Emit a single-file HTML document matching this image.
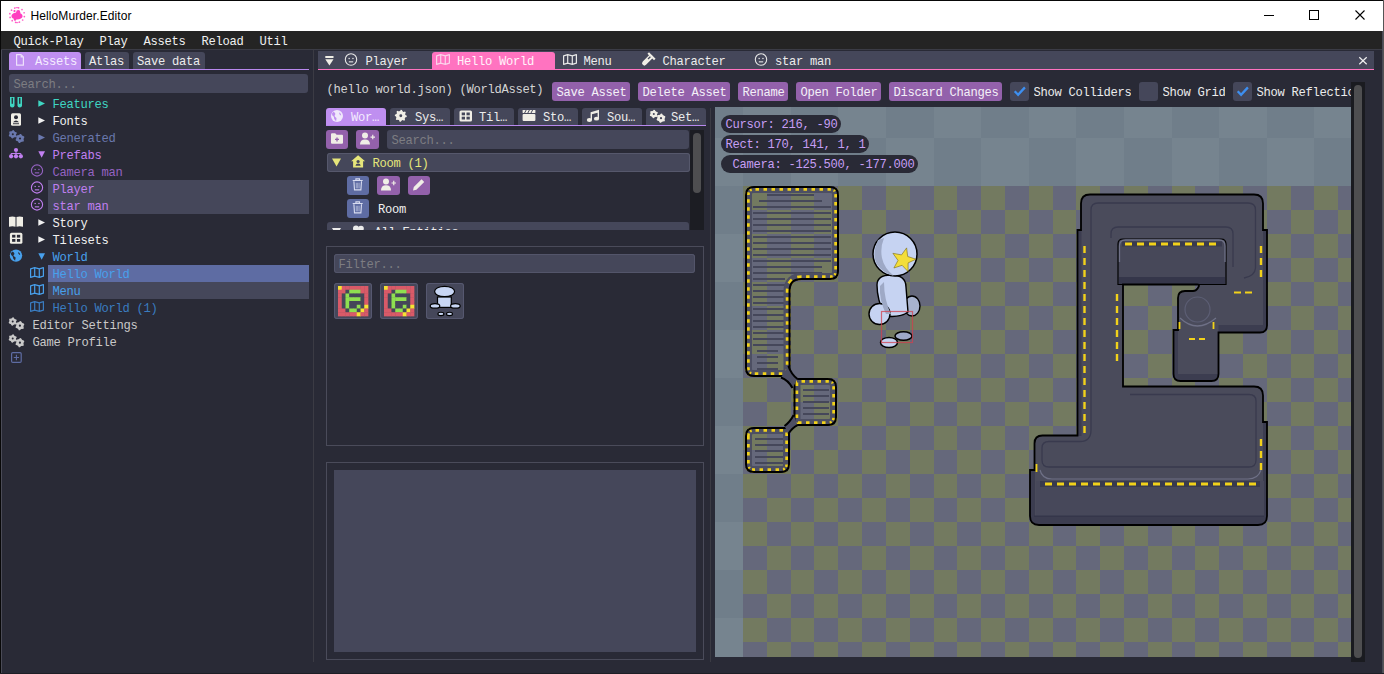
<!DOCTYPE html><html><head><meta charset="utf-8"><style>
html,body{margin:0;padding:0}
body{width:1384px;height:674px;overflow:hidden;position:relative;background:#292a36;font-family:"Liberation Mono",monospace}
.t{position:absolute;font-family:"Liberation Mono",monospace;font-size:12.15px;letter-spacing:-0.29px;line-height:14px;white-space:pre}
.r{position:absolute}
.s{position:absolute;overflow:visible}
.ts{position:absolute;font-family:"Liberation Sans",sans-serif;font-size:12px;line-height:14px;white-space:pre;color:#000}
</style></head><body>
<div class="r" style="left:0px;top:0px;width:1384px;height:31px;background:#ffffff;"></div>
<div class="r" style="left:0px;top:0px;width:1384px;height:1px;background:#080808;"></div>
<div class="r" style="left:0px;top:0px;width:1px;height:674px;background:#080808;"></div>
<div class="r" style="left:1383px;top:0px;width:1px;height:674px;background:#555555;"></div>
<div class="ts" style="left:30.5px;top:9px;letter-spacing:0.1px">HelloMurder.Editor</div>
<div class="r" style="left:1264px;top:15px;width:10px;height:1px;background:#000;"></div>
<div class="r" style="left:1309px;top:10px;width:10px;height:10px;background:transparent;border:1px solid #000;box-sizing:border-box"></div>
<svg class="s" style="left:1355px;top:10px;" width="10" height="10" viewBox="0 0 10 10"><path d="M0.5 0.5L9.5 9.5M9.5 0.5L0.5 9.5" stroke="#000" stroke-width="1.1"/></svg>
<div class="r" style="left:1px;top:31px;width:1382px;height:18px;background:#242424;"></div>
<div class="r" style="left:1px;top:49px;width:1382px;height:1px;background:#3b3c46;"></div>
<div class="r" style="left:1382px;top:31px;width:1px;height:642px;background:#4a4b57;"></div>
<div class="t" style="left:13.5px;top:35px;color:#f0f0f0;">Quick-Play</div>
<div class="t" style="left:99.5px;top:35px;color:#f0f0f0;">Play</div>
<div class="t" style="left:143.5px;top:35px;color:#f0f0f0;">Assets</div>
<div class="t" style="left:201.5px;top:35px;color:#f0f0f0;">Reload</div>
<div class="t" style="left:259.5px;top:35px;color:#f0f0f0;">Util</div>
<div class="r" style="left:1px;top:50px;width:2px;height:623px;background:#4a4b57;width:1px"></div>
<div class="r" style="left:9px;top:52px;width:72px;height:17px;background:#bf8ff0;border-radius:3px 3px 0 0"></div>
<div class="r" style="left:85px;top:52px;width:44px;height:17px;background:#45475a;border-radius:3px 3px 0 0"></div>
<div class="r" style="left:133px;top:52px;width:72px;height:17px;background:#45475a;border-radius:3px 3px 0 0"></div>
<div class="r" style="left:9px;top:69px;width:300px;height:1px;background:#b888ee;"></div>
<div class="t" style="left:35px;top:55px;color:#f4ecff;">Assets</div>
<div class="t" style="left:89px;top:55px;color:#ececec;">Atlas</div>
<div class="t" style="left:137px;top:55px;color:#ececec;">Save data</div>
<div class="r" style="left:9px;top:74px;width:299px;height:19px;background:#45475a;border-radius:3px"></div>
<div class="t" style="left:13.5px;top:78px;color:#7d7d82;">Search...</div>
<div class="r" style="left:48px;top:180px;width:261px;height:34px;background:#45475a;"></div>
<div class="r" style="left:48px;top:265px;width:261px;height:17px;background:#5e6ca3;"></div>
<div class="r" style="left:48px;top:282px;width:261px;height:17px;background:#45475a;"></div>
<div class="t" style="left:52.5px;top:98px;color:#3fd6c2;">Features</div>
<div class="t" style="left:52.5px;top:115px;color:#f0f0f0;">Fonts</div>
<div class="t" style="left:52.5px;top:132px;color:#6a78ad;">Generated</div>
<div class="t" style="left:52.5px;top:149px;color:#c07ff0;">Prefabs</div>
<div class="t" style="left:52.5px;top:166px;color:#9563c2;">Camera man</div>
<div class="t" style="left:52.5px;top:183px;color:#c07ff0;">Player</div>
<div class="t" style="left:52.5px;top:200px;color:#c07ff0;">star man</div>
<div class="t" style="left:52.5px;top:217px;color:#f0f0f0;">Story</div>
<div class="t" style="left:52.5px;top:234px;color:#f0f0f0;">Tilesets</div>
<div class="t" style="left:52.5px;top:251px;color:#48a0ec;">World</div>
<div class="t" style="left:52.5px;top:268px;color:#48a0ec;">Hello World</div>
<div class="t" style="left:52.5px;top:285px;color:#48a0ec;">Menu</div>
<div class="t" style="left:52.5px;top:302px;color:#3a7cc0;">Hello World (1)</div>
<div class="t" style="left:32.5px;top:319px;color:#c9c9c9;">Editor Settings</div>
<div class="t" style="left:32.5px;top:336px;color:#c9c9c9;">Game Profile</div>
<div class="r" style="left:313px;top:50px;width:1px;height:612px;background:#3b3b44;"></div>
<div class="r" style="left:318px;top:51px;width:1056px;height:18px;background:#45475a;"></div>
<div class="r" style="left:432px;top:52px;width:123px;height:17px;background:#ff73c0;border-radius:3px 3px 0 0"></div>
<div class="r" style="left:318px;top:69px;width:1056px;height:1px;background:#ff73c0;"></div>
<div class="t" style="left:365.5px;top:55px;color:#ececec;">Player</div>
<div class="t" style="left:457px;top:55px;color:#fff4fb;">Hello World</div>
<div class="t" style="left:583.5px;top:55px;color:#ececec;">Menu</div>
<div class="t" style="left:662.5px;top:55px;color:#ececec;">Character</div>
<div class="t" style="left:775px;top:55px;color:#ececec;">star man</div>
<div class="t" style="left:326.5px;top:83px;color:#d4d4d4;">(hello world.json) (WorldAsset)</div>
<div class="r" style="left:552px;top:82px;width:78px;height:19px;background:#9361ab;border-radius:3px"></div>
<div class="t" style="left:556.5px;top:86px;color:#f4f0f8;">Save Asset</div>
<div class="r" style="left:638px;top:82px;width:92px;height:19px;background:#9361ab;border-radius:3px"></div>
<div class="t" style="left:642.5px;top:86px;color:#f4f0f8;">Delete Asset</div>
<div class="r" style="left:738px;top:82px;width:50px;height:19px;background:#9361ab;border-radius:3px"></div>
<div class="t" style="left:742.5px;top:86px;color:#f4f0f8;">Rename</div>
<div class="r" style="left:796px;top:82px;width:85px;height:19px;background:#9361ab;border-radius:3px"></div>
<div class="t" style="left:800.5px;top:86px;color:#f4f0f8;">Open Folder</div>
<div class="r" style="left:889px;top:82px;width:113px;height:19px;background:#9361ab;border-radius:3px"></div>
<div class="t" style="left:893.5px;top:86px;color:#f4f0f8;">Discard Changes</div>
<div class="r" style="left:1010px;top:82px;width:19px;height:19px;background:#45475a;border-radius:3px"></div>
<div class="t" style="left:1033.5px;top:86px;color:#ececec;max-width:317px;overflow:hidden">Show Colliders</div>
<div class="r" style="left:1139px;top:82px;width:19px;height:19px;background:#45475a;border-radius:3px"></div>
<div class="t" style="left:1162.5px;top:86px;color:#ececec;max-width:188px;overflow:hidden">Show Grid</div>
<div class="r" style="left:1233px;top:82px;width:19px;height:19px;background:#45475a;border-radius:3px"></div>
<div class="t" style="left:1256.5px;top:86px;color:#ececec;max-width:94px;overflow:hidden">Show Reflection</div>
<div class="r" style="left:326px;top:108px;width:60px;height:17px;background:#bf8ff0;border-radius:3px 3px 0 0"></div>
<div class="t" style="left:351px;top:111px;color:#f4ecff;">Wor…</div>
<div class="r" style="left:390px;top:108px;width:60px;height:17px;background:#45475a;border-radius:3px 3px 0 0"></div>
<div class="t" style="left:415px;top:111px;color:#ececec;">Sys…</div>
<div class="r" style="left:454px;top:108px;width:60px;height:17px;background:#45475a;border-radius:3px 3px 0 0"></div>
<div class="t" style="left:479px;top:111px;color:#ececec;">Til…</div>
<div class="r" style="left:518px;top:108px;width:60px;height:17px;background:#45475a;border-radius:3px 3px 0 0"></div>
<div class="t" style="left:543px;top:111px;color:#ececec;">Sto…</div>
<div class="r" style="left:582px;top:108px;width:60px;height:17px;background:#45475a;border-radius:3px 3px 0 0"></div>
<div class="t" style="left:607px;top:111px;color:#ececec;">Sou…</div>
<div class="r" style="left:646px;top:108px;width:60px;height:17px;background:#45475a;border-radius:3px 3px 0 0"></div>
<div class="t" style="left:671px;top:111px;color:#ececec;">Set…</div>
<div class="r" style="left:326px;top:125px;width:380px;height:1px;background:#b888ee;"></div>
<div class="r" style="left:326px;top:130px;width:22px;height:19px;background:#9361ab;border-radius:3px"></div>
<div class="r" style="left:356px;top:130px;width:23px;height:19px;background:#9361ab;border-radius:3px"></div>
<div class="r" style="left:387px;top:130px;width:302px;height:19px;background:#45475a;border-radius:3px"></div>
<div class="t" style="left:391.5px;top:134px;color:#7d7d82;">Search...</div>
<div class="r" style="left:690px;top:130px;width:14px;height:100px;background:#1c1d23;"></div>
<div class="r" style="left:693px;top:133px;width:8px;height:60px;background:#4e4e50;border-radius:4px"></div>
<div class="r" style="left:327px;top:153px;width:363px;height:19px;background:#45475a;border-radius:3px;box-shadow:inset 0 0 0 1px #56586c"></div>
<div class="t" style="left:372.5px;top:157px;color:#e6e67a;">Room (1)</div>
<div class="r" style="left:347px;top:176px;width:22px;height:19px;background:#5e6ca3;border-radius:3px"></div>
<div class="r" style="left:377px;top:176px;width:23px;height:19px;background:#9361ab;border-radius:3px"></div>
<div class="r" style="left:408px;top:176px;width:22px;height:19px;background:#9361ab;border-radius:3px"></div>
<div class="r" style="left:347px;top:199px;width:22px;height:19px;background:#5e6ca3;border-radius:3px"></div>
<div class="t" style="left:378px;top:203px;color:#f0f0f0;">Room</div>
<div style="position:absolute;left:327px;top:222px;width:362px;height:8px;overflow:hidden"><div class="r" style="left:0;top:0;width:362px;height:19px;background:#45475a;border-radius:3px"></div><div class="t" style="left:47.5px;top:4px;color:#ececec">All Entities</div><svg class="s" style="left:0;top:0" width="362" height="19"><path d="M5 6L14 6L9.5 14Z" fill="#ececec"/><circle cx="29" cy="6.5" r="3" fill="#ececec"/><circle cx="34" cy="6.5" r="2.8" fill="#ececec"/></svg></div>
<div class="r" style="left:326px;top:246px;width:378px;height:200px;background:transparent;border:1px solid #4a4b5a;box-sizing:border-box"></div>
<div class="r" style="left:334px;top:254px;width:361px;height:19px;background:#45475a;border-radius:3px;box-shadow:inset 0 0 0 1px #53556a"></div>
<div class="t" style="left:338.5px;top:258px;color:#7d7d82;">Filter...</div>
<div class="r" style="left:334px;top:283px;width:38px;height:36px;background:#45475a;border-radius:3px;box-shadow:inset 0 0 0 1px #565870"></div>
<div class="r" style="left:380px;top:283px;width:38px;height:36px;background:#45475a;border-radius:3px;box-shadow:inset 0 0 0 1px #565870"></div>
<div class="r" style="left:426px;top:283px;width:38px;height:36px;background:#45475a;border-radius:3px;box-shadow:inset 0 0 0 1px #565870"></div>
<div class="r" style="left:326px;top:462px;width:378px;height:198px;background:transparent;border:1px solid #4a4b5a;box-sizing:border-box"></div>
<div class="r" style="left:334px;top:470px;width:362px;height:182px;background:#45475a;"></div>
<div class="r" style="left:710px;top:108px;width:1px;height:554px;background:#3b3b44;"></div>
<svg class="s" style="left:715px;top:107px;overflow:hidden" width="636" height="550" shape-rendering="crispEdges"><rect x="0" y="0" width="636" height="550" fill="#76848f"/><rect x="-20" y="-17" width="48" height="48" fill="#707e8a"/><rect x="76" y="-17" width="47" height="48" fill="#707e8a"/><rect x="171" y="-17" width="48" height="48" fill="#707e8a"/><rect x="266" y="-17" width="48" height="48" fill="#707e8a"/><rect x="361" y="-17" width="48" height="48" fill="#707e8a"/><rect x="457" y="-17" width="47" height="48" fill="#707e8a"/><rect x="552" y="-17" width="47" height="48" fill="#707e8a"/><rect x="647" y="-17" width="48" height="48" fill="#707e8a"/><rect x="28" y="31" width="48" height="48" fill="#707e8a"/><rect x="123" y="31" width="48" height="48" fill="#707e8a"/><rect x="219" y="31" width="47" height="48" fill="#707e8a"/><rect x="314" y="31" width="47" height="48" fill="#707e8a"/><rect x="409" y="31" width="48" height="48" fill="#707e8a"/><rect x="504" y="31" width="48" height="48" fill="#707e8a"/><rect x="599" y="31" width="48" height="48" fill="#707e8a"/><rect x="-20" y="79" width="48" height="48" fill="#707e8a"/><rect x="76" y="79" width="47" height="48" fill="#707e8a"/><rect x="171" y="79" width="48" height="48" fill="#707e8a"/><rect x="266" y="79" width="48" height="48" fill="#707e8a"/><rect x="361" y="79" width="48" height="48" fill="#707e8a"/><rect x="457" y="79" width="47" height="48" fill="#707e8a"/><rect x="552" y="79" width="47" height="48" fill="#707e8a"/><rect x="647" y="79" width="48" height="48" fill="#707e8a"/><rect x="28" y="127" width="48" height="48" fill="#707e8a"/><rect x="123" y="127" width="48" height="48" fill="#707e8a"/><rect x="219" y="127" width="47" height="48" fill="#707e8a"/><rect x="314" y="127" width="47" height="48" fill="#707e8a"/><rect x="409" y="127" width="48" height="48" fill="#707e8a"/><rect x="504" y="127" width="48" height="48" fill="#707e8a"/><rect x="599" y="127" width="48" height="48" fill="#707e8a"/><rect x="-20" y="175" width="48" height="48" fill="#707e8a"/><rect x="76" y="175" width="47" height="48" fill="#707e8a"/><rect x="171" y="175" width="48" height="48" fill="#707e8a"/><rect x="266" y="175" width="48" height="48" fill="#707e8a"/><rect x="361" y="175" width="48" height="48" fill="#707e8a"/><rect x="457" y="175" width="47" height="48" fill="#707e8a"/><rect x="552" y="175" width="47" height="48" fill="#707e8a"/><rect x="647" y="175" width="48" height="48" fill="#707e8a"/><rect x="28" y="223" width="48" height="48" fill="#707e8a"/><rect x="123" y="223" width="48" height="48" fill="#707e8a"/><rect x="219" y="223" width="47" height="48" fill="#707e8a"/><rect x="314" y="223" width="47" height="48" fill="#707e8a"/><rect x="409" y="223" width="48" height="48" fill="#707e8a"/><rect x="504" y="223" width="48" height="48" fill="#707e8a"/><rect x="599" y="223" width="48" height="48" fill="#707e8a"/><rect x="-20" y="271" width="48" height="48" fill="#707e8a"/><rect x="76" y="271" width="47" height="48" fill="#707e8a"/><rect x="171" y="271" width="48" height="48" fill="#707e8a"/><rect x="266" y="271" width="48" height="48" fill="#707e8a"/><rect x="361" y="271" width="48" height="48" fill="#707e8a"/><rect x="457" y="271" width="47" height="48" fill="#707e8a"/><rect x="552" y="271" width="47" height="48" fill="#707e8a"/><rect x="647" y="271" width="48" height="48" fill="#707e8a"/><rect x="28" y="319" width="48" height="48" fill="#707e8a"/><rect x="123" y="319" width="48" height="48" fill="#707e8a"/><rect x="219" y="319" width="47" height="48" fill="#707e8a"/><rect x="314" y="319" width="47" height="48" fill="#707e8a"/><rect x="409" y="319" width="48" height="48" fill="#707e8a"/><rect x="504" y="319" width="48" height="48" fill="#707e8a"/><rect x="599" y="319" width="48" height="48" fill="#707e8a"/><rect x="-20" y="367" width="48" height="48" fill="#707e8a"/><rect x="76" y="367" width="47" height="48" fill="#707e8a"/><rect x="171" y="367" width="48" height="48" fill="#707e8a"/><rect x="266" y="367" width="48" height="48" fill="#707e8a"/><rect x="361" y="367" width="48" height="48" fill="#707e8a"/><rect x="457" y="367" width="47" height="48" fill="#707e8a"/><rect x="552" y="367" width="47" height="48" fill="#707e8a"/><rect x="647" y="367" width="48" height="48" fill="#707e8a"/><rect x="28" y="415" width="48" height="48" fill="#707e8a"/><rect x="123" y="415" width="48" height="48" fill="#707e8a"/><rect x="219" y="415" width="47" height="48" fill="#707e8a"/><rect x="314" y="415" width="47" height="48" fill="#707e8a"/><rect x="409" y="415" width="48" height="48" fill="#707e8a"/><rect x="504" y="415" width="48" height="48" fill="#707e8a"/><rect x="599" y="415" width="48" height="48" fill="#707e8a"/><rect x="-20" y="463" width="48" height="48" fill="#707e8a"/><rect x="76" y="463" width="47" height="48" fill="#707e8a"/><rect x="171" y="463" width="48" height="48" fill="#707e8a"/><rect x="266" y="463" width="48" height="48" fill="#707e8a"/><rect x="361" y="463" width="48" height="48" fill="#707e8a"/><rect x="457" y="463" width="47" height="48" fill="#707e8a"/><rect x="552" y="463" width="47" height="48" fill="#707e8a"/><rect x="647" y="463" width="48" height="48" fill="#707e8a"/><rect x="28" y="511" width="48" height="48" fill="#707e8a"/><rect x="123" y="511" width="48" height="48" fill="#707e8a"/><rect x="219" y="511" width="47" height="48" fill="#707e8a"/><rect x="314" y="511" width="47" height="48" fill="#707e8a"/><rect x="409" y="511" width="48" height="48" fill="#707e8a"/><rect x="504" y="511" width="48" height="48" fill="#707e8a"/><rect x="599" y="511" width="48" height="48" fill="#707e8a"/><rect x="28" y="79" width="608" height="471" fill="#737a60"/><rect x="52" y="79" width="24" height="24" fill="#65687b"/><rect x="99" y="79" width="24" height="24" fill="#65687b"/><rect x="147" y="79" width="24" height="24" fill="#65687b"/><rect x="195" y="79" width="24" height="24" fill="#65687b"/><rect x="242" y="79" width="24" height="24" fill="#65687b"/><rect x="290" y="79" width="24" height="24" fill="#65687b"/><rect x="338" y="79" width="23" height="24" fill="#65687b"/><rect x="385" y="79" width="24" height="24" fill="#65687b"/><rect x="433" y="79" width="24" height="24" fill="#65687b"/><rect x="480" y="79" width="24" height="24" fill="#65687b"/><rect x="528" y="79" width="24" height="24" fill="#65687b"/><rect x="576" y="79" width="23" height="24" fill="#65687b"/><rect x="623" y="79" width="24" height="24" fill="#65687b"/><rect x="28" y="103" width="24" height="24" fill="#65687b"/><rect x="76" y="103" width="23" height="24" fill="#65687b"/><rect x="123" y="103" width="24" height="24" fill="#65687b"/><rect x="171" y="103" width="24" height="24" fill="#65687b"/><rect x="219" y="103" width="23" height="24" fill="#65687b"/><rect x="266" y="103" width="24" height="24" fill="#65687b"/><rect x="314" y="103" width="24" height="24" fill="#65687b"/><rect x="361" y="103" width="24" height="24" fill="#65687b"/><rect x="409" y="103" width="24" height="24" fill="#65687b"/><rect x="457" y="103" width="23" height="24" fill="#65687b"/><rect x="504" y="103" width="24" height="24" fill="#65687b"/><rect x="552" y="103" width="24" height="24" fill="#65687b"/><rect x="599" y="103" width="24" height="24" fill="#65687b"/><rect x="647" y="103" width="24" height="24" fill="#65687b"/><rect x="52" y="127" width="24" height="24" fill="#65687b"/><rect x="99" y="127" width="24" height="24" fill="#65687b"/><rect x="147" y="127" width="24" height="24" fill="#65687b"/><rect x="195" y="127" width="24" height="24" fill="#65687b"/><rect x="242" y="127" width="24" height="24" fill="#65687b"/><rect x="290" y="127" width="24" height="24" fill="#65687b"/><rect x="338" y="127" width="23" height="24" fill="#65687b"/><rect x="385" y="127" width="24" height="24" fill="#65687b"/><rect x="433" y="127" width="24" height="24" fill="#65687b"/><rect x="480" y="127" width="24" height="24" fill="#65687b"/><rect x="528" y="127" width="24" height="24" fill="#65687b"/><rect x="576" y="127" width="23" height="24" fill="#65687b"/><rect x="623" y="127" width="24" height="24" fill="#65687b"/><rect x="28" y="151" width="24" height="24" fill="#65687b"/><rect x="76" y="151" width="23" height="24" fill="#65687b"/><rect x="123" y="151" width="24" height="24" fill="#65687b"/><rect x="171" y="151" width="24" height="24" fill="#65687b"/><rect x="219" y="151" width="23" height="24" fill="#65687b"/><rect x="266" y="151" width="24" height="24" fill="#65687b"/><rect x="314" y="151" width="24" height="24" fill="#65687b"/><rect x="361" y="151" width="24" height="24" fill="#65687b"/><rect x="409" y="151" width="24" height="24" fill="#65687b"/><rect x="457" y="151" width="23" height="24" fill="#65687b"/><rect x="504" y="151" width="24" height="24" fill="#65687b"/><rect x="552" y="151" width="24" height="24" fill="#65687b"/><rect x="599" y="151" width="24" height="24" fill="#65687b"/><rect x="647" y="151" width="24" height="24" fill="#65687b"/><rect x="52" y="175" width="24" height="24" fill="#65687b"/><rect x="99" y="175" width="24" height="24" fill="#65687b"/><rect x="147" y="175" width="24" height="24" fill="#65687b"/><rect x="195" y="175" width="24" height="24" fill="#65687b"/><rect x="242" y="175" width="24" height="24" fill="#65687b"/><rect x="290" y="175" width="24" height="24" fill="#65687b"/><rect x="338" y="175" width="23" height="24" fill="#65687b"/><rect x="385" y="175" width="24" height="24" fill="#65687b"/><rect x="433" y="175" width="24" height="24" fill="#65687b"/><rect x="480" y="175" width="24" height="24" fill="#65687b"/><rect x="528" y="175" width="24" height="24" fill="#65687b"/><rect x="576" y="175" width="23" height="24" fill="#65687b"/><rect x="623" y="175" width="24" height="24" fill="#65687b"/><rect x="28" y="199" width="24" height="24" fill="#65687b"/><rect x="76" y="199" width="23" height="24" fill="#65687b"/><rect x="123" y="199" width="24" height="24" fill="#65687b"/><rect x="171" y="199" width="24" height="24" fill="#65687b"/><rect x="219" y="199" width="23" height="24" fill="#65687b"/><rect x="266" y="199" width="24" height="24" fill="#65687b"/><rect x="314" y="199" width="24" height="24" fill="#65687b"/><rect x="361" y="199" width="24" height="24" fill="#65687b"/><rect x="409" y="199" width="24" height="24" fill="#65687b"/><rect x="457" y="199" width="23" height="24" fill="#65687b"/><rect x="504" y="199" width="24" height="24" fill="#65687b"/><rect x="552" y="199" width="24" height="24" fill="#65687b"/><rect x="599" y="199" width="24" height="24" fill="#65687b"/><rect x="647" y="199" width="24" height="24" fill="#65687b"/><rect x="52" y="223" width="24" height="24" fill="#65687b"/><rect x="99" y="223" width="24" height="24" fill="#65687b"/><rect x="147" y="223" width="24" height="24" fill="#65687b"/><rect x="195" y="223" width="24" height="24" fill="#65687b"/><rect x="242" y="223" width="24" height="24" fill="#65687b"/><rect x="290" y="223" width="24" height="24" fill="#65687b"/><rect x="338" y="223" width="23" height="24" fill="#65687b"/><rect x="385" y="223" width="24" height="24" fill="#65687b"/><rect x="433" y="223" width="24" height="24" fill="#65687b"/><rect x="480" y="223" width="24" height="24" fill="#65687b"/><rect x="528" y="223" width="24" height="24" fill="#65687b"/><rect x="576" y="223" width="23" height="24" fill="#65687b"/><rect x="623" y="223" width="24" height="24" fill="#65687b"/><rect x="28" y="247" width="24" height="24" fill="#65687b"/><rect x="76" y="247" width="23" height="24" fill="#65687b"/><rect x="123" y="247" width="24" height="24" fill="#65687b"/><rect x="171" y="247" width="24" height="24" fill="#65687b"/><rect x="219" y="247" width="23" height="24" fill="#65687b"/><rect x="266" y="247" width="24" height="24" fill="#65687b"/><rect x="314" y="247" width="24" height="24" fill="#65687b"/><rect x="361" y="247" width="24" height="24" fill="#65687b"/><rect x="409" y="247" width="24" height="24" fill="#65687b"/><rect x="457" y="247" width="23" height="24" fill="#65687b"/><rect x="504" y="247" width="24" height="24" fill="#65687b"/><rect x="552" y="247" width="24" height="24" fill="#65687b"/><rect x="599" y="247" width="24" height="24" fill="#65687b"/><rect x="647" y="247" width="24" height="24" fill="#65687b"/><rect x="52" y="271" width="24" height="24" fill="#65687b"/><rect x="99" y="271" width="24" height="24" fill="#65687b"/><rect x="147" y="271" width="24" height="24" fill="#65687b"/><rect x="195" y="271" width="24" height="24" fill="#65687b"/><rect x="242" y="271" width="24" height="24" fill="#65687b"/><rect x="290" y="271" width="24" height="24" fill="#65687b"/><rect x="338" y="271" width="23" height="24" fill="#65687b"/><rect x="385" y="271" width="24" height="24" fill="#65687b"/><rect x="433" y="271" width="24" height="24" fill="#65687b"/><rect x="480" y="271" width="24" height="24" fill="#65687b"/><rect x="528" y="271" width="24" height="24" fill="#65687b"/><rect x="576" y="271" width="23" height="24" fill="#65687b"/><rect x="623" y="271" width="24" height="24" fill="#65687b"/><rect x="28" y="295" width="24" height="24" fill="#65687b"/><rect x="76" y="295" width="23" height="24" fill="#65687b"/><rect x="123" y="295" width="24" height="24" fill="#65687b"/><rect x="171" y="295" width="24" height="24" fill="#65687b"/><rect x="219" y="295" width="23" height="24" fill="#65687b"/><rect x="266" y="295" width="24" height="24" fill="#65687b"/><rect x="314" y="295" width="24" height="24" fill="#65687b"/><rect x="361" y="295" width="24" height="24" fill="#65687b"/><rect x="409" y="295" width="24" height="24" fill="#65687b"/><rect x="457" y="295" width="23" height="24" fill="#65687b"/><rect x="504" y="295" width="24" height="24" fill="#65687b"/><rect x="552" y="295" width="24" height="24" fill="#65687b"/><rect x="599" y="295" width="24" height="24" fill="#65687b"/><rect x="647" y="295" width="24" height="24" fill="#65687b"/><rect x="52" y="319" width="24" height="24" fill="#65687b"/><rect x="99" y="319" width="24" height="24" fill="#65687b"/><rect x="147" y="319" width="24" height="24" fill="#65687b"/><rect x="195" y="319" width="24" height="24" fill="#65687b"/><rect x="242" y="319" width="24" height="24" fill="#65687b"/><rect x="290" y="319" width="24" height="24" fill="#65687b"/><rect x="338" y="319" width="23" height="24" fill="#65687b"/><rect x="385" y="319" width="24" height="24" fill="#65687b"/><rect x="433" y="319" width="24" height="24" fill="#65687b"/><rect x="480" y="319" width="24" height="24" fill="#65687b"/><rect x="528" y="319" width="24" height="24" fill="#65687b"/><rect x="576" y="319" width="23" height="24" fill="#65687b"/><rect x="623" y="319" width="24" height="24" fill="#65687b"/><rect x="28" y="343" width="24" height="24" fill="#65687b"/><rect x="76" y="343" width="23" height="24" fill="#65687b"/><rect x="123" y="343" width="24" height="24" fill="#65687b"/><rect x="171" y="343" width="24" height="24" fill="#65687b"/><rect x="219" y="343" width="23" height="24" fill="#65687b"/><rect x="266" y="343" width="24" height="24" fill="#65687b"/><rect x="314" y="343" width="24" height="24" fill="#65687b"/><rect x="361" y="343" width="24" height="24" fill="#65687b"/><rect x="409" y="343" width="24" height="24" fill="#65687b"/><rect x="457" y="343" width="23" height="24" fill="#65687b"/><rect x="504" y="343" width="24" height="24" fill="#65687b"/><rect x="552" y="343" width="24" height="24" fill="#65687b"/><rect x="599" y="343" width="24" height="24" fill="#65687b"/><rect x="647" y="343" width="24" height="24" fill="#65687b"/><rect x="52" y="367" width="24" height="24" fill="#65687b"/><rect x="99" y="367" width="24" height="24" fill="#65687b"/><rect x="147" y="367" width="24" height="24" fill="#65687b"/><rect x="195" y="367" width="24" height="24" fill="#65687b"/><rect x="242" y="367" width="24" height="24" fill="#65687b"/><rect x="290" y="367" width="24" height="24" fill="#65687b"/><rect x="338" y="367" width="23" height="24" fill="#65687b"/><rect x="385" y="367" width="24" height="24" fill="#65687b"/><rect x="433" y="367" width="24" height="24" fill="#65687b"/><rect x="480" y="367" width="24" height="24" fill="#65687b"/><rect x="528" y="367" width="24" height="24" fill="#65687b"/><rect x="576" y="367" width="23" height="24" fill="#65687b"/><rect x="623" y="367" width="24" height="24" fill="#65687b"/><rect x="28" y="391" width="24" height="24" fill="#65687b"/><rect x="76" y="391" width="23" height="24" fill="#65687b"/><rect x="123" y="391" width="24" height="24" fill="#65687b"/><rect x="171" y="391" width="24" height="24" fill="#65687b"/><rect x="219" y="391" width="23" height="24" fill="#65687b"/><rect x="266" y="391" width="24" height="24" fill="#65687b"/><rect x="314" y="391" width="24" height="24" fill="#65687b"/><rect x="361" y="391" width="24" height="24" fill="#65687b"/><rect x="409" y="391" width="24" height="24" fill="#65687b"/><rect x="457" y="391" width="23" height="24" fill="#65687b"/><rect x="504" y="391" width="24" height="24" fill="#65687b"/><rect x="552" y="391" width="24" height="24" fill="#65687b"/><rect x="599" y="391" width="24" height="24" fill="#65687b"/><rect x="647" y="391" width="24" height="24" fill="#65687b"/><rect x="52" y="415" width="24" height="24" fill="#65687b"/><rect x="99" y="415" width="24" height="24" fill="#65687b"/><rect x="147" y="415" width="24" height="24" fill="#65687b"/><rect x="195" y="415" width="24" height="24" fill="#65687b"/><rect x="242" y="415" width="24" height="24" fill="#65687b"/><rect x="290" y="415" width="24" height="24" fill="#65687b"/><rect x="338" y="415" width="23" height="24" fill="#65687b"/><rect x="385" y="415" width="24" height="24" fill="#65687b"/><rect x="433" y="415" width="24" height="24" fill="#65687b"/><rect x="480" y="415" width="24" height="24" fill="#65687b"/><rect x="528" y="415" width="24" height="24" fill="#65687b"/><rect x="576" y="415" width="23" height="24" fill="#65687b"/><rect x="623" y="415" width="24" height="24" fill="#65687b"/><rect x="28" y="439" width="24" height="24" fill="#65687b"/><rect x="76" y="439" width="23" height="24" fill="#65687b"/><rect x="123" y="439" width="24" height="24" fill="#65687b"/><rect x="171" y="439" width="24" height="24" fill="#65687b"/><rect x="219" y="439" width="23" height="24" fill="#65687b"/><rect x="266" y="439" width="24" height="24" fill="#65687b"/><rect x="314" y="439" width="24" height="24" fill="#65687b"/><rect x="361" y="439" width="24" height="24" fill="#65687b"/><rect x="409" y="439" width="24" height="24" fill="#65687b"/><rect x="457" y="439" width="23" height="24" fill="#65687b"/><rect x="504" y="439" width="24" height="24" fill="#65687b"/><rect x="552" y="439" width="24" height="24" fill="#65687b"/><rect x="599" y="439" width="24" height="24" fill="#65687b"/><rect x="647" y="439" width="24" height="24" fill="#65687b"/><rect x="52" y="463" width="24" height="24" fill="#65687b"/><rect x="99" y="463" width="24" height="24" fill="#65687b"/><rect x="147" y="463" width="24" height="24" fill="#65687b"/><rect x="195" y="463" width="24" height="24" fill="#65687b"/><rect x="242" y="463" width="24" height="24" fill="#65687b"/><rect x="290" y="463" width="24" height="24" fill="#65687b"/><rect x="338" y="463" width="23" height="24" fill="#65687b"/><rect x="385" y="463" width="24" height="24" fill="#65687b"/><rect x="433" y="463" width="24" height="24" fill="#65687b"/><rect x="480" y="463" width="24" height="24" fill="#65687b"/><rect x="528" y="463" width="24" height="24" fill="#65687b"/><rect x="576" y="463" width="23" height="24" fill="#65687b"/><rect x="623" y="463" width="24" height="24" fill="#65687b"/><rect x="28" y="487" width="24" height="24" fill="#65687b"/><rect x="76" y="487" width="23" height="24" fill="#65687b"/><rect x="123" y="487" width="24" height="24" fill="#65687b"/><rect x="171" y="487" width="24" height="24" fill="#65687b"/><rect x="219" y="487" width="23" height="24" fill="#65687b"/><rect x="266" y="487" width="24" height="24" fill="#65687b"/><rect x="314" y="487" width="24" height="24" fill="#65687b"/><rect x="361" y="487" width="24" height="24" fill="#65687b"/><rect x="409" y="487" width="24" height="24" fill="#65687b"/><rect x="457" y="487" width="23" height="24" fill="#65687b"/><rect x="504" y="487" width="24" height="24" fill="#65687b"/><rect x="552" y="487" width="24" height="24" fill="#65687b"/><rect x="599" y="487" width="24" height="24" fill="#65687b"/><rect x="647" y="487" width="24" height="24" fill="#65687b"/><rect x="52" y="511" width="24" height="24" fill="#65687b"/><rect x="99" y="511" width="24" height="24" fill="#65687b"/><rect x="147" y="511" width="24" height="24" fill="#65687b"/><rect x="195" y="511" width="24" height="24" fill="#65687b"/><rect x="242" y="511" width="24" height="24" fill="#65687b"/><rect x="290" y="511" width="24" height="24" fill="#65687b"/><rect x="338" y="511" width="23" height="24" fill="#65687b"/><rect x="385" y="511" width="24" height="24" fill="#65687b"/><rect x="433" y="511" width="24" height="24" fill="#65687b"/><rect x="480" y="511" width="24" height="24" fill="#65687b"/><rect x="528" y="511" width="24" height="24" fill="#65687b"/><rect x="576" y="511" width="23" height="24" fill="#65687b"/><rect x="623" y="511" width="24" height="24" fill="#65687b"/><rect x="28" y="535" width="24" height="24" fill="#65687b"/><rect x="76" y="535" width="23" height="24" fill="#65687b"/><rect x="123" y="535" width="24" height="24" fill="#65687b"/><rect x="171" y="535" width="24" height="24" fill="#65687b"/><rect x="219" y="535" width="23" height="24" fill="#65687b"/><rect x="266" y="535" width="24" height="24" fill="#65687b"/><rect x="314" y="535" width="24" height="24" fill="#65687b"/><rect x="361" y="535" width="24" height="24" fill="#65687b"/><rect x="409" y="535" width="24" height="24" fill="#65687b"/><rect x="457" y="535" width="23" height="24" fill="#65687b"/><rect x="504" y="535" width="24" height="24" fill="#65687b"/><rect x="552" y="535" width="24" height="24" fill="#65687b"/><rect x="599" y="535" width="24" height="24" fill="#65687b"/><rect x="647" y="535" width="24" height="24" fill="#65687b"/></svg>
<svg class="s" style="left:715px;top:107px;overflow:hidden" width="636" height="550" viewBox="715 107 636 550"><defs><clipPath id="clA"><path d="M745.00 195.00 Q745.00 186.00 754.00 186.00 L830.00 186.00 Q839.00 186.00 839.00 195.00 L839.00 271.00 Q839.00 280.00 830.00 280.00 L801.50 280.00 Q790.50 280.00 790.50 291.00 L790.50 377.00 Q790.50 377.00 790.50 377.00 L754.00 377.00 Q745.00 377.00 745.00 368.00 Z M793.50 378.00 Q793.50 378.00 793.50 378.00 L828.00 378.00 Q837.00 378.00 837.00 387.00 L837.00 417.00 Q837.00 426.00 828.00 426.00 L793.50 426.00 Q793.50 426.00 793.50 426.00 Z M745.00 436.00 Q745.00 427.00 754.00 427.00 L790.00 427.00 Q790.00 427.00 790.00 427.00 L790.00 464.00 Q790.00 473.00 781.00 473.00 L754.00 473.00 Q745.00 473.00 745.00 464.00 Z M788.4 366 Q791 374 797.5 379 L792.5 388 Q788 380 781 377.5 Z M793.7 415 Q790 422 784.5 426 L788.4 434 Q792 428 797.5 425.2 Z"/></clipPath><clipPath id="clA1"><path d="M745.00 195.00 Q745.00 186.00 754.00 186.00 L830.00 186.00 Q839.00 186.00 839.00 195.00 L839.00 271.00 Q839.00 280.00 830.00 280.00 L801.50 280.00 Q790.50 280.00 790.50 291.00 L790.50 377.00 Q790.50 377.00 790.50 377.00 L754.00 377.00 Q745.00 377.00 745.00 368.00 Z"/></clipPath><clipPath id="clA2"><path d="M793.50 378.00 Q793.50 378.00 793.50 378.00 L828.00 378.00 Q837.00 378.00 837.00 387.00 L837.00 417.00 Q837.00 426.00 828.00 426.00 L793.50 426.00 Q793.50 426.00 793.50 426.00 Z"/></clipPath><clipPath id="clA3"><path d="M745.00 436.00 Q745.00 427.00 754.00 427.00 L790.00 427.00 Q790.00 427.00 790.00 427.00 L790.00 464.00 Q790.00 473.00 781.00 473.00 L754.00 473.00 Q745.00 473.00 745.00 464.00 Z"/></clipPath></defs><g fill="#45475a" clip-path="url(#clA1)"><rect x="767" y="194" width="47" height="2"/><rect x="759" y="200" width="63" height="2"/><rect x="753" y="206" width="78" height="2"/><rect x="753" y="212" width="78" height="2"/><rect x="753" y="218" width="78" height="2"/><rect x="753" y="224" width="78" height="2"/><rect x="753" y="230" width="78" height="2"/><rect x="753" y="236" width="78" height="2"/><rect x="753" y="242" width="78" height="2"/><rect x="753" y="248" width="78" height="2"/><rect x="753" y="254" width="78" height="2"/><rect x="753" y="260" width="78" height="2"/><rect x="753" y="266" width="69" height="2"/><rect x="753" y="272" width="69" height="2"/><rect x="753" y="278" width="32" height="2"/><rect x="753" y="284" width="32" height="2"/><rect x="753" y="290" width="32" height="2"/><rect x="753" y="296" width="32" height="2"/><rect x="753" y="302" width="32" height="2"/><rect x="753" y="308" width="32" height="2"/><rect x="753" y="314" width="32" height="2"/><rect x="753" y="320" width="32" height="2"/><rect x="753" y="326" width="32" height="2"/><rect x="753" y="332" width="32" height="2"/><rect x="753" y="338" width="32" height="2"/><rect x="753" y="344" width="32" height="2"/><rect x="757" y="350" width="21" height="2"/><rect x="757" y="356" width="21" height="2"/><rect x="757" y="362" width="21" height="2"/><rect x="757" y="368" width="21" height="2"/></g><g fill="#45475a"><rect x="803" y="389" width="26" height="2"/><rect x="803" y="395" width="26" height="2"/><rect x="803" y="401" width="26" height="2"/><rect x="803" y="407" width="26" height="2"/><rect x="803" y="413" width="26" height="2"/><rect x="803" y="419" width="26" height="2"/><rect x="755" y="438" width="28" height="2"/><rect x="755" y="444" width="28" height="2"/><rect x="755" y="450" width="28" height="2"/><rect x="755" y="456" width="28" height="2"/><rect x="755" y="462" width="28" height="2"/></g><g clip-path="url(#clA1)"><path d="M745.00 195.00 Q745.00 186.00 754.00 186.00 L830.00 186.00 Q839.00 186.00 839.00 195.00 L839.00 271.00 Q839.00 280.00 830.00 280.00 L801.50 280.00 Q790.50 280.00 790.50 291.00 L790.50 377.00 Q790.50 377.00 790.50 377.00 L754.00 377.00 Q745.00 377.00 745.00 368.00 Z" fill="none" stroke="#4d4f63" stroke-width="14"/><path d="M745.00 195.00 Q745.00 186.00 754.00 186.00 L830.00 186.00 Q839.00 186.00 839.00 195.00 L839.00 271.00 Q839.00 280.00 830.00 280.00 L801.50 280.00 Q790.50 280.00 790.50 291.00 L790.50 377.00 Q790.50 377.00 790.50 377.00 L754.00 377.00 Q745.00 377.00 745.00 368.00 Z" fill="none" stroke="#f2d21a" stroke-width="9.5" stroke-dasharray="3.5 4.5"/><path d="M745.00 195.00 Q745.00 186.00 754.00 186.00 L830.00 186.00 Q839.00 186.00 839.00 195.00 L839.00 271.00 Q839.00 280.00 830.00 280.00 L801.50 280.00 Q790.50 280.00 790.50 291.00 L790.50 377.00 Q790.50 377.00 790.50 377.00 L754.00 377.00 Q745.00 377.00 745.00 368.00 Z" fill="none" stroke="#000" stroke-width="4"/></g><g clip-path="url(#clA2)"><path d="M793.50 378.00 Q793.50 378.00 793.50 378.00 L828.00 378.00 Q837.00 378.00 837.00 387.00 L837.00 417.00 Q837.00 426.00 828.00 426.00 L793.50 426.00 Q793.50 426.00 793.50 426.00 Z" fill="none" stroke="#4d4f63" stroke-width="14"/><path d="M793.50 378.00 Q793.50 378.00 793.50 378.00 L828.00 378.00 Q837.00 378.00 837.00 387.00 L837.00 417.00 Q837.00 426.00 828.00 426.00 L793.50 426.00 Q793.50 426.00 793.50 426.00 Z" fill="none" stroke="#f2d21a" stroke-width="9.5" stroke-dasharray="3.5 4.5"/><path d="M793.50 378.00 Q793.50 378.00 793.50 378.00 L828.00 378.00 Q837.00 378.00 837.00 387.00 L837.00 417.00 Q837.00 426.00 828.00 426.00 L793.50 426.00 Q793.50 426.00 793.50 426.00 Z" fill="none" stroke="#000" stroke-width="4"/></g><g clip-path="url(#clA3)"><path d="M745.00 436.00 Q745.00 427.00 754.00 427.00 L790.00 427.00 Q790.00 427.00 790.00 427.00 L790.00 464.00 Q790.00 473.00 781.00 473.00 L754.00 473.00 Q745.00 473.00 745.00 464.00 Z" fill="none" stroke="#4d4f63" stroke-width="14"/><path d="M745.00 436.00 Q745.00 427.00 754.00 427.00 L790.00 427.00 Q790.00 427.00 790.00 427.00 L790.00 464.00 Q790.00 473.00 781.00 473.00 L754.00 473.00 Q745.00 473.00 745.00 464.00 Z" fill="none" stroke="#f2d21a" stroke-width="9.5" stroke-dasharray="3.5 4.5"/><path d="M745.00 436.00 Q745.00 427.00 754.00 427.00 L790.00 427.00 Q790.00 427.00 790.00 427.00 L790.00 464.00 Q790.00 473.00 781.00 473.00 L754.00 473.00 Q745.00 473.00 745.00 464.00 Z" fill="none" stroke="#000" stroke-width="4"/></g><path d="M788.4 366 Q791 374 797.5 379 L792.5 388 Q788 380 781 377.5 Z M793.7 415 Q790 422 784.5 426 L788.4 434 Q792 428 797.5 425.2 Z" fill="#4d4f63"/><path d="M788.4 366 Q791 374 797.5 379 M792.5 388 Q788 380 781 377.5 M793.7 415 Q790 422 784.5 426 M788.4 434 Q792 428 797.5 425.2" fill="none" stroke="#000" stroke-width="2"/><defs><clipPath id="clB"><path d="M1081.00 203.50 Q1081.00 194.50 1090.00 194.50 L1254.00 194.50 Q1263.00 194.50 1263.00 203.50 L1263.00 230.00 Q1263.00 230.00 1263.00 230.00 L1267.00 230.00 Q1267.00 230.00 1267.00 230.00 L1267.00 325.50 Q1267.00 332.50 1260.00 332.50 L1218.50 332.50 Q1218.50 332.50 1218.50 332.50 L1218.50 374.00 Q1218.50 381.00 1211.50 381.00 L1180.50 381.00 Q1173.50 381.00 1173.50 374.00 L1173.50 330.00 Q1173.50 330.00 1173.50 330.00 L1178.00 330.00 Q1178.00 330.00 1178.00 330.00 L1178.00 298.00 Q1178.00 291.00 1185.00 291.00 L1193.00 291.00 Q1196.00 291.00 1197.57 288.45 L1198.43 287.05 Q1200.00 284.50 1197.00 284.50 L1123.00 284.50 Q1123.00 284.50 1123.00 284.50 L1123.00 386.50 Q1123.00 386.50 1123.00 386.50 L1254.00 386.50 Q1263.00 386.50 1263.00 395.50 L1263.00 422.00 Q1263.00 422.00 1263.00 422.00 L1267.00 422.00 Q1267.00 422.00 1267.00 422.00 L1267.00 516.00 Q1267.00 525.00 1258.00 525.00 L1039.00 525.00 Q1030.00 525.00 1030.00 516.00 L1030.00 470.00 Q1030.00 470.00 1030.00 470.00 L1034.50 470.00 Q1034.50 470.00 1034.50 470.00 L1034.50 443.50 Q1034.50 435.50 1042.50 435.50 L1077.50 435.50 Q1077.50 435.50 1077.50 435.50 L1077.50 230.00 Q1077.50 230.00 1077.50 230.00 L1081.00 230.00 Q1081.00 230.00 1081.00 230.00 Z"/></clipPath></defs><path d="M1081.00 203.50 Q1081.00 194.50 1090.00 194.50 L1254.00 194.50 Q1263.00 194.50 1263.00 203.50 L1263.00 230.00 Q1263.00 230.00 1263.00 230.00 L1267.00 230.00 Q1267.00 230.00 1267.00 230.00 L1267.00 325.50 Q1267.00 332.50 1260.00 332.50 L1218.50 332.50 Q1218.50 332.50 1218.50 332.50 L1218.50 374.00 Q1218.50 381.00 1211.50 381.00 L1180.50 381.00 Q1173.50 381.00 1173.50 374.00 L1173.50 330.00 Q1173.50 330.00 1173.50 330.00 L1178.00 330.00 Q1178.00 330.00 1178.00 330.00 L1178.00 298.00 Q1178.00 291.00 1185.00 291.00 L1193.00 291.00 Q1196.00 291.00 1197.57 288.45 L1198.43 287.05 Q1200.00 284.50 1197.00 284.50 L1123.00 284.50 Q1123.00 284.50 1123.00 284.50 L1123.00 386.50 Q1123.00 386.50 1123.00 386.50 L1254.00 386.50 Q1263.00 386.50 1263.00 395.50 L1263.00 422.00 Q1263.00 422.00 1263.00 422.00 L1267.00 422.00 Q1267.00 422.00 1267.00 422.00 L1267.00 516.00 Q1267.00 525.00 1258.00 525.00 L1039.00 525.00 Q1030.00 525.00 1030.00 516.00 L1030.00 470.00 Q1030.00 470.00 1030.00 470.00 L1034.50 470.00 Q1034.50 470.00 1034.50 470.00 L1034.50 443.50 Q1034.50 435.50 1042.50 435.50 L1077.50 435.50 Q1077.50 435.50 1077.50 435.50 L1077.50 230.00 Q1077.50 230.00 1077.50 230.00 L1081.00 230.00 Q1081.00 230.00 1081.00 230.00 Z" fill="#4a4b5b"/><g clip-path="url(#clB)"><rect x="1077.5" y="230" width="4" height="206" fill="#3c3d50"/><rect x="1263" y="230" width="4" height="103" fill="#3c3d50"/><rect x="1263" y="422" width="4" height="104" fill="#3c3d50"/><rect x="1030" y="470" width="5" height="56" fill="#3c3d50"/><rect x="1030" y="517" width="237" height="8" fill="#3c3d50"/><rect x="1173.5" y="330" width="4.5" height="51" fill="#3c3d50"/><rect x="1173.5" y="374" width="45" height="7" fill="#3c3d50"/><rect x="1218.5" y="325" width="48.5" height="7.5" fill="#3c3d50"/><path d="M1091 430 V210 Q1091 203 1098 203 H1248 Q1255.5 203 1255.5 210 V268 Q1255 276 1244 278" fill="none" stroke="#393a4e" stroke-width="1.3"/><path d="M1111 238 V234 Q1111 227 1118 227 H1226 Q1233 227 1233 234 V267" fill="none" stroke="#393a4e" stroke-width="1.3"/><path d="M1091 430 Q1091 441.5 1080 441.5 H1049 Q1042 441.5 1042 448 V460 Q1042 467 1049 467 H1249 Q1256 467 1256 460 V401 Q1256 394.5 1249 394.5 H1130" fill="none" stroke="#393a4e" stroke-width="1.3"/><path d="M1118.00 244.00 Q1118.00 239.00 1123.00 239.00 L1221.00 239.00 Q1226.00 239.00 1226.00 244.00 L1226.00 284.50 Q1226.00 284.50 1226.00 284.50 L1118.00 284.50 Q1118.00 284.50 1118.00 284.50 Z" fill="#474859" stroke="#000" stroke-width="1.2"/><rect x="1119" y="277" width="106" height="7" fill="#35364a"/><path d="M1119.5 262 V246 Q1119.5 240 1125.5 240 H1219 Q1225 240 1225 246 V262" fill="none" stroke="#6e7086" stroke-width="1.3"/><circle cx="1197.5" cy="309.5" r="12.5" fill="none" stroke="#5c5e74" stroke-width="1.2"/><path d="M1180 318 Q1197 334 1216 318" fill="none" stroke="#6e7086" stroke-width="1.2"/><path d="M1040 470 Q1042 479 1052 479 L1248 479 Q1258 479 1261 470" fill="none" stroke="#6e7086" stroke-width="1.2"/><rect x="1036" y="481" width="228" height="36" fill="#47485a"/><rect x="1040" y="481" width="220" height="6" fill="#393a4e"/><rect x="1034" y="515.5" width="230" height="1.5" fill="#35364a"/><rect x="1122" y="241.5" width="100" height="5" fill="#393a4e"/></g><path d="M1081.00 203.50 Q1081.00 194.50 1090.00 194.50 L1254.00 194.50 Q1263.00 194.50 1263.00 203.50 L1263.00 230.00 Q1263.00 230.00 1263.00 230.00 L1267.00 230.00 Q1267.00 230.00 1267.00 230.00 L1267.00 325.50 Q1267.00 332.50 1260.00 332.50 L1218.50 332.50 Q1218.50 332.50 1218.50 332.50 L1218.50 374.00 Q1218.50 381.00 1211.50 381.00 L1180.50 381.00 Q1173.50 381.00 1173.50 374.00 L1173.50 330.00 Q1173.50 330.00 1173.50 330.00 L1178.00 330.00 Q1178.00 330.00 1178.00 330.00 L1178.00 298.00 Q1178.00 291.00 1185.00 291.00 L1193.00 291.00 Q1196.00 291.00 1197.57 288.45 L1198.43 287.05 Q1200.00 284.50 1197.00 284.50 L1123.00 284.50 Q1123.00 284.50 1123.00 284.50 L1123.00 386.50 Q1123.00 386.50 1123.00 386.50 L1254.00 386.50 Q1263.00 386.50 1263.00 395.50 L1263.00 422.00 Q1263.00 422.00 1263.00 422.00 L1267.00 422.00 Q1267.00 422.00 1267.00 422.00 L1267.00 516.00 Q1267.00 525.00 1258.00 525.00 L1039.00 525.00 Q1030.00 525.00 1030.00 516.00 L1030.00 470.00 Q1030.00 470.00 1030.00 470.00 L1034.50 470.00 Q1034.50 470.00 1034.50 470.00 L1034.50 443.50 Q1034.50 435.50 1042.50 435.50 L1077.50 435.50 Q1077.50 435.50 1077.50 435.50 L1077.50 230.00 Q1077.50 230.00 1077.50 230.00 L1081.00 230.00 Q1081.00 230.00 1081.00 230.00 Z" fill="none" stroke="#000" stroke-width="1.8"/><path d="M1125 244 H1216" stroke="#f2d21a" stroke-width="3" stroke-dasharray="7 5"/><path d="M1045 484 H1256" stroke="#f2d21a" stroke-width="3" stroke-dasharray="7 5"/><path d="M1084.5 246 V436" stroke="#f2d21a" stroke-width="2.4" stroke-dasharray="7 5"/><path d="M1117 294 V364" stroke="#f2d21a" stroke-width="2.4" stroke-dasharray="7 5"/><path d="M1261 246 V280" stroke="#f2d21a" stroke-width="2.4" stroke-dasharray="7 5"/><path d="M1261 439 V472" stroke="#f2d21a" stroke-width="2.4" stroke-dasharray="7 5"/><path d="M1036.5 464 V472" stroke="#f2d21a" stroke-width="1.8"/><path d="M1234 292.5 H1256" stroke="#f2d21a" stroke-width="2.2" stroke-dasharray="7 4"/><path d="M1189 339 H1208" stroke="#f2d21a" stroke-width="2.2" stroke-dasharray="6 4"/><path d="M1179.5 322 V329 M1213.5 322 V329" stroke="#f2d21a" stroke-width="1.8"/><ellipse cx="903.5" cy="336" rx="8.5" ry="4.3" fill="#9ea9c6" stroke="#000" stroke-width="1.5"/><ellipse cx="889" cy="342.5" rx="8.5" ry="5" fill="#c6d3f2" stroke="#000" stroke-width="1.5"/><ellipse cx="912" cy="306" rx="8" ry="10" fill="#a8b3cf" stroke="#000" stroke-width="1.4"/><path d="M877 285 Q877 275 891 275 Q906 275 906 287 L908 312 Q900 318 885 316 Q877 300 877 285 Z" fill="#c6d3f2" stroke="#000" stroke-width="1.4"/><circle cx="879.5" cy="314" r="10.5" fill="#c6d3f2" stroke="#000" stroke-width="1.4"/><circle cx="895" cy="254" r="22" fill="#c6d3f2" stroke="#000" stroke-width="1.5"/><path d="M878 240 Q870 258 880 268 Q886 274 894 276 Q884 268 882 258 Q880 248 884 238 Z" fill="#9ea9c6"/><path d="M880 286 Q879 300 886 314 L891 314 Q884 300 884 282 Z" fill="#9ea9c6"/><polygon points="906.6,247.9 907.7,256.5 916.0,259.2 908.1,262.9 908.1,271.6 902.1,265.3 893.9,268.0 898.0,260.4 892.9,253.3 901.5,254.9" fill="#f4de3a" stroke="#7a6a10" stroke-width="0.6"/><rect x="881.5" y="311.5" width="31" height="31" fill="none" stroke="#d0404e" stroke-width="1.2" opacity="0.75"/></svg>
<div class="r" style="left:721px;top:115px;width:120px;height:18px;background:#292a36;border-radius:9px"></div>
<div class="t" style="left:725.5px;top:118px;color:#c69ef4;">Cursor: 216, -90</div>
<div class="r" style="left:721px;top:135px;width:148px;height:18px;background:#292a36;border-radius:9px"></div>
<div class="t" style="left:725.5px;top:138px;color:#c69ef4;">Rect: 170, 141, 1, 1</div>
<div class="r" style="left:721px;top:155px;width:197px;height:18px;background:#292a36;border-radius:9px"></div>
<div class="t" style="left:725.5px;top:158px;color:#c69ef4;"> Camera: -125.500, -177.000</div>
<div class="r" style="left:1351px;top:82px;width:14px;height:580px;background:#1a1b20;"></div>
<div class="r" style="left:1354px;top:85px;width:8px;height:573px;background:#4e4e50;border-radius:4px"></div>
<svg class="s" style="left:1358.5px;top:57px;" width="8" height="7.5" viewBox="0 0 8 7.5"><path d="M0.3 0.3L7.7 7.2M7.7 0.3L0.3 7.2" stroke="#f0f0f0" stroke-width="1.2"/></svg>
<svg class="s" style="left:0;top:0" width="1384" height="674"><ellipse cx="17" cy="16" rx="5.6" ry="3.6" fill="#ff40c0"/><circle cx="18.2" cy="12.2" r="2.1" fill="#ff40c0"/><circle cx="14.5" cy="11" r="1.1" fill="#ff40c0"/><circle cx="15" cy="19.5" r="1.2" fill="#ff40c0"/><ellipse cx="17" cy="7.6" rx="1.8" ry="0.6" fill="#ff70d0"/><ellipse cx="17" cy="22.6" rx="1.8" ry="0.6" fill="#ff70d0"/><circle cx="24.35" cy="16.57" r="0.85" fill="#ff5cc6"/><circle cx="22.65" cy="20.00" r="0.85" fill="#ff5cc6"/><circle cx="19.45" cy="22.12" r="0.85" fill="#ff5cc6"/><circle cx="15.63" cy="22.35" r="0.85" fill="#ff5cc6"/><circle cx="12.20" cy="20.65" r="0.85" fill="#ff5cc6"/><circle cx="10.08" cy="17.45" r="0.85" fill="#ff5cc6"/><circle cx="9.85" cy="13.63" r="0.85" fill="#ff5cc6"/><circle cx="11.55" cy="10.20" r="0.85" fill="#ff5cc6"/><circle cx="14.75" cy="8.08" r="0.85" fill="#ff5cc6"/><circle cx="18.57" cy="7.85" r="0.85" fill="#ff5cc6"/><circle cx="22.00" cy="9.55" r="0.85" fill="#ff5cc6"/><circle cx="24.12" cy="12.75" r="0.85" fill="#ff5cc6"/><path d="M38.3 100.3L45 103.5L38.3 106.7Z" fill="#3fd6c2"/><path d="M38.3 117.3L45 120.5L38.3 123.7Z" fill="#f0f0f0"/><path d="M38.3 134.3L45 137.5L38.3 140.7Z" fill="#6a78ad"/><path d="M38.3 151.3L45 151.3L41.65 157.7Z" fill="#c07ff0"/><path d="M38.3 219.3L45 222.5L38.3 225.7Z" fill="#f0f0f0"/><path d="M38.3 236.3L45 239.5L38.3 242.7Z" fill="#f0f0f0"/><path d="M38.3 253.3L45 253.3L41.65 259.7Z" fill="#48a0ec"/><path d="M16.6 54.6 H21 L23.4 57 V65.2 H16.6 Z" fill="none" stroke="#ede0fb" stroke-width="1.2" stroke-linejoin="round"/><path d="M20.6 54.6 L23.4 57.4 L20.6 57.4 Z" fill="#ede0fb"/><path d="M10 97 L14.5 97 L14.5 105.5 Q14.5 107.6 12.25 107.6 Q10 107.6 10 105.5 Z" fill="#3fd6c2"/><rect x="11.6" y="97.8" width="1.3" height="6" fill="#292a36"/><path d="M17.5 97 L22.0 97 L22.0 105.5 Q22.0 107.6 19.75 107.6 Q17.5 107.6 17.5 105.5 Z" fill="#3fd6c2"/><rect x="19.1" y="97.8" width="1.3" height="6" fill="#292a36"/><rect x="11" y="113.3" width="10" height="12.5" rx="1.5" fill="#f0eee6"/><circle cx="16" cy="117.3" r="2" fill="#292a36"/><path d="M13 122.3 Q16 118.8 19 122.3 Z" fill="#292a36"/><rect x="13" y="123.3" width="6" height="0.9" fill="#292a36"/><polygon points="12.80,130.10 13.89,130.24 14.44,131.46 15.12,131.98 16.44,132.20 16.86,133.21 16.08,134.30 15.96,135.15 16.44,136.40 15.77,137.27 14.44,137.14 13.65,137.46 12.80,138.50 11.71,138.36 11.16,137.14 10.48,136.62 9.16,136.40 8.74,135.39 9.52,134.30 9.64,133.45 9.16,132.20 9.83,131.33 11.16,131.46 11.95,131.14" fill="#6a78ad"/><circle cx="12.8" cy="134.3" r="3.11" fill="#6a78ad"/><circle cx="12.8" cy="134.3" r="1.01" fill="#292a36"/><polygon points="20.00,133.90 21.19,134.06 21.79,135.39 22.54,135.96 23.98,136.20 24.44,137.31 23.59,138.50 23.47,139.43 23.98,140.80 23.25,141.75 21.79,141.61 20.93,141.97 20.00,143.10 18.81,142.94 18.21,141.61 17.46,141.04 16.02,140.80 15.56,139.69 16.41,138.50 16.53,137.57 16.02,136.20 16.75,135.25 18.21,135.39 19.07,135.03" fill="#6a78ad"/><circle cx="20.0" cy="138.5" r="3.40" fill="#6a78ad"/><circle cx="20.0" cy="138.5" r="1.10" fill="#292a36"/><circle cx="16" cy="150" r="2.1" fill="#c07ff0"/><path d="M16 151.5 V153.5 M11.1 155.5 V153.5 H20.9 V155.5 M16 153.5 V155.5" stroke="#c07ff0" stroke-width="1" fill="none"/><circle cx="11.1" cy="156.3" r="2.1" fill="#c07ff0"/><circle cx="16" cy="156.3" r="2.1" fill="#c07ff0"/><circle cx="20.9" cy="156.3" r="2.1" fill="#c07ff0"/><circle cx="37" cy="170.5" r="5.6" fill="none" stroke="#9563c2" stroke-width="1.1"/><rect x="34.5" y="168.9" width="1.3" height="1.2" fill="#9563c2"/><rect x="38.3" y="168.9" width="1.3" height="1.2" fill="#9563c2"/><rect x="34.8" y="172.3" width="4.4" height="1.1" fill="#9563c2"/><circle cx="37" cy="187.5" r="5.6" fill="none" stroke="#c07ff0" stroke-width="1.1"/><rect x="34.5" y="185.9" width="1.3" height="1.2" fill="#c07ff0"/><rect x="38.3" y="185.9" width="1.3" height="1.2" fill="#c07ff0"/><rect x="34.8" y="189.3" width="4.4" height="1.1" fill="#c07ff0"/><circle cx="37" cy="204.5" r="5.6" fill="none" stroke="#c07ff0" stroke-width="1.1"/><rect x="34.5" y="202.9" width="1.3" height="1.2" fill="#c07ff0"/><rect x="38.3" y="202.9" width="1.3" height="1.2" fill="#c07ff0"/><rect x="34.8" y="206.3" width="4.4" height="1.1" fill="#c07ff0"/><path d="M9 217.0 Q12.5 215.89999999999998 15.5 217.0 L15.5 226.7 Q12.5 225.7 9 226.7 Z" fill="#f0eee6"/><path d="M16.5 217.0 Q19.5 215.89999999999998 23 217.0 L23 226.7 Q19.5 225.7 16.5 226.7 Z" fill="#f0eee6"/><rect x="9.9" y="232.8" width="12.5" height="11" rx="1.6" fill="#f0eee6"/><rect x="12.100000000000001" y="234.8" width="3.3" height="2.8" fill="#292a36"/><rect x="16.9" y="234.8" width="3.3" height="2.8" fill="#292a36"/><rect x="12.100000000000001" y="239.0" width="3.3" height="2.8" fill="#292a36"/><rect x="16.9" y="239.0" width="3.3" height="2.8" fill="#292a36"/><circle cx="16" cy="255.6" r="6.2" fill="#48a0ec"/><path d="M12.5 251.4 Q15 252.6 14.2 254.4 Q12.8 255.4 14.2 256.5 Q16.2 257.1 15.4 258.8 L15.1 260.8 Q12.5 258.6 12.8 256.4 Q10.5 255.1 11 253.1 Z" fill="#292a36"/><path d="M18.2 251.79999999999998 Q20.2 253.1 20.2 255.1 Q18.8 254.79999999999998 18.4 253.6 Z" fill="#292a36"/><path d="M30.6 268.8 L34.7 267.6 L39.3 268.8 L43.4 267.6 L43.4 276.2 L39.3 277.4 L34.7 276.2 L30.6 277.4 Z M34.7 267.6 L34.7 276.2 M39.3 268.8 L39.3 277.4" fill="none" stroke="#48a0ec" stroke-width="1.2" stroke-linejoin="round"/><path d="M30.6 285.8 L34.7 284.6 L39.3 285.8 L43.4 284.6 L43.4 293.2 L39.3 294.4 L34.7 293.2 L30.6 294.4 Z M34.7 284.6 L34.7 293.2 M39.3 285.8 L39.3 294.4" fill="none" stroke="#48a0ec" stroke-width="1.2" stroke-linejoin="round"/><path d="M30.6 302.8 L34.7 301.6 L39.3 302.8 L43.4 301.6 L43.4 310.2 L39.3 311.4 L34.7 310.2 L30.6 311.4 Z M34.7 301.6 L34.7 310.2 M39.3 302.8 L39.3 311.4" fill="none" stroke="#3a7cc0" stroke-width="1.2" stroke-linejoin="round"/><polygon points="12.70,317.30 13.79,317.44 14.34,318.66 15.02,319.18 16.34,319.40 16.76,320.41 15.98,321.50 15.86,322.35 16.34,323.60 15.67,324.47 14.34,324.34 13.55,324.66 12.70,325.70 11.61,325.56 11.06,324.34 10.38,323.82 9.06,323.60 8.64,322.59 9.42,321.50 9.54,320.65 9.06,319.40 9.73,318.53 11.06,318.66 11.85,318.34" fill="#c9c9c9"/><circle cx="12.7" cy="321.5" r="3.11" fill="#c9c9c9"/><circle cx="12.7" cy="321.5" r="1.01" fill="#292a36"/><polygon points="19.90,321.10 21.09,321.26 21.69,322.59 22.44,323.16 23.88,323.40 24.34,324.51 23.49,325.70 23.37,326.63 23.88,328.00 23.15,328.95 21.69,328.81 20.83,329.17 19.90,330.30 18.71,330.14 18.11,328.81 17.36,328.24 15.92,328.00 15.46,326.89 16.31,325.70 16.43,324.77 15.92,323.40 16.65,322.45 18.11,322.59 18.97,322.23" fill="#c9c9c9"/><circle cx="19.9" cy="325.7" r="3.40" fill="#c9c9c9"/><circle cx="19.9" cy="325.7" r="1.10" fill="#292a36"/><polygon points="12.70,334.30 13.79,334.44 14.34,335.66 15.02,336.18 16.34,336.40 16.76,337.41 15.98,338.50 15.86,339.35 16.34,340.60 15.67,341.47 14.34,341.34 13.55,341.66 12.70,342.70 11.61,342.56 11.06,341.34 10.38,340.82 9.06,340.60 8.64,339.59 9.42,338.50 9.54,337.65 9.06,336.40 9.73,335.53 11.06,335.66 11.85,335.34" fill="#c9c9c9"/><circle cx="12.7" cy="338.5" r="3.11" fill="#c9c9c9"/><circle cx="12.7" cy="338.5" r="1.01" fill="#292a36"/><polygon points="19.90,338.10 21.09,338.26 21.69,339.59 22.44,340.16 23.88,340.40 24.34,341.51 23.49,342.70 23.37,343.63 23.88,345.00 23.15,345.95 21.69,345.81 20.83,346.17 19.90,347.30 18.71,347.14 18.11,345.81 17.36,345.24 15.92,345.00 15.46,343.89 16.31,342.70 16.43,341.77 15.92,340.40 16.65,339.45 18.11,339.59 18.97,339.23" fill="#c9c9c9"/><circle cx="19.9" cy="342.7" r="3.40" fill="#c9c9c9"/><circle cx="19.9" cy="342.7" r="1.10" fill="#292a36"/><rect x="11.6" y="352.6" width="9.6" height="9.8" rx="1.2" fill="none" stroke="#5e6ca3" stroke-width="1.2"/><path d="M13.8 357.5 H19 M16.4 354.8 V360.2" stroke="#5e6ca3" stroke-width="1.1"/><rect x="325.3" y="56" width="8.2" height="2" fill="#f0eee6"/><path d="M325.3 59.3 L333.5 59.3 L329.40000000000003 65.4 Z" fill="#f0eee6"/><circle cx="351" cy="59.5" r="5.7" fill="none" stroke="#e8e8e8" stroke-width="1.1"/><rect x="348.5" y="57.9" width="1.3" height="1.2" fill="#e8e8e8"/><rect x="352.3" y="57.9" width="1.3" height="1.2" fill="#e8e8e8"/><rect x="348.8" y="61.3" width="4.4" height="1.1" fill="#e8e8e8"/><path d="M436.6 55.8 L440.7 54.6 L445.3 55.8 L449.4 54.6 L449.4 63.2 L445.3 64.4 L440.7 63.2 L436.6 64.4 Z M440.7 54.6 L440.7 63.2 M445.3 55.8 L445.3 64.4" fill="none" stroke="#fbd3ea" stroke-width="1.2" stroke-linejoin="round"/><path d="M563.6 55.8 L567.7 54.6 L572.3 55.8 L576.4 54.6 L576.4 63.2 L572.3 64.4 L567.7 63.2 L563.6 64.4 Z M567.7 54.6 L567.7 63.2 M572.3 55.8 L572.3 64.4" fill="none" stroke="#e8e8e8" stroke-width="1.2" stroke-linejoin="round"/><path d="M644.4 63.2 L650.4 57.2" stroke="#f0eee6" stroke-width="4.6" stroke-linecap="round"/><path d="M649.0 53.800000000000004 L654.0 58.800000000000004" stroke="#f0eee6" stroke-width="2.2" stroke-linecap="square"/><path d="M648.0 59.0 L650.4 56.800000000000004" stroke="#45475a" stroke-width="1.3"/><circle cx="761" cy="59.5" r="5.7" fill="none" stroke="#e8e8e8" stroke-width="1.1"/><rect x="758.5" y="57.9" width="1.3" height="1.2" fill="#e8e8e8"/><rect x="762.3" y="57.9" width="1.3" height="1.2" fill="#e8e8e8"/><rect x="758.8" y="61.3" width="4.4" height="1.1" fill="#e8e8e8"/><path d="M1014.7 91.2 L1018.1 94.8 L1024.9 87.4" stroke="#3d8ff0" stroke-width="2.3" fill="none"/><path d="M1237.7 91.2 L1241.1 94.8 L1247.9 87.4" stroke="#3d8ff0" stroke-width="2.3" fill="none"/><circle cx="337" cy="116" r="6" fill="#f0e8fb"/><path d="M333.5 111.8 Q336 113 335.2 114.8 Q333.8 115.8 335.2 116.9 Q337.2 117.5 336.4 119.2 L336.1 121.2 Q333.5 119 333.8 116.8 Q331.5 115.5 332 113.5 Z" fill="#bf8ff0"/><path d="M339.2 112.2 Q341.2 113.5 341.2 115.5 Q339.8 115.2 339.4 114 Z" fill="#bf8ff0"/><polygon points="400.80,109.80 401.97,109.92 402.59,111.48 403.40,111.91 405.04,111.56 405.79,112.47 405.12,114.01 405.39,114.89 406.80,115.80 406.68,116.97 405.12,117.59 404.69,118.40 405.04,120.04 404.13,120.79 402.59,120.12 401.71,120.39 400.80,121.80 399.63,121.68 399.01,120.12 398.20,119.69 396.56,120.04 395.81,119.13 396.48,117.59 396.21,116.71 394.80,115.80 394.92,114.63 396.48,114.01 396.91,113.20 396.56,111.56 397.47,110.81 399.01,111.48 399.89,111.21" fill="#f0eee6"/><circle cx="400.8" cy="115.8" r="4.44" fill="#f0eee6"/><circle cx="400.8" cy="115.8" r="1.44" fill="#45475a"/><rect x="459.5" y="110.5" width="12.5" height="11" rx="1.6" fill="#f0eee6"/><rect x="461.7" y="112.5" width="3.3" height="2.8" fill="#45475a"/><rect x="466.5" y="112.5" width="3.3" height="2.8" fill="#45475a"/><rect x="461.7" y="116.7" width="3.3" height="2.8" fill="#45475a"/><rect x="466.5" y="116.7" width="3.3" height="2.8" fill="#45475a"/><rect x="522.6" y="114" width="12.8" height="7" rx="1" fill="#f0eee6"/><rect x="522.6" y="110" width="12.8" height="3" rx="0.6" fill="#f0eee6"/><path d="M524.6 113 L526.2 110 M527.8000000000001 113 L529.4 110 M531.0 113 L532.6 110" stroke="#45475a" stroke-width="1"/><path d="M590.5999999999999 112.2 L599.0 109.8 L599.0 118.8 L597.5999999999999 118.8 L597.5999999999999 112.8 L592.0 114.2 L592.0 120.2 L590.5999999999999 120.2 Z" fill="#f0eee6"/><ellipse cx="589.4" cy="120.0" rx="2.6" ry="1.9" fill="#f0eee6"/><ellipse cx="596.5" cy="118.7" rx="2.6" ry="1.9" fill="#f0eee6"/><polygon points="653.80,109.80 654.89,109.94 655.44,111.16 656.12,111.68 657.44,111.90 657.86,112.91 657.08,114.00 656.96,114.85 657.44,116.10 656.77,116.97 655.44,116.84 654.65,117.16 653.80,118.20 652.71,118.06 652.16,116.84 651.48,116.32 650.16,116.10 649.74,115.09 650.52,114.00 650.64,113.15 650.16,111.90 650.83,111.03 652.16,111.16 652.95,110.84" fill="#f0eee6"/><circle cx="653.8" cy="114.0" r="3.11" fill="#f0eee6"/><circle cx="653.8" cy="114.0" r="1.01" fill="#45475a"/><polygon points="661.00,113.60 662.19,113.76 662.79,115.09 663.54,115.66 664.98,115.90 665.44,117.01 664.59,118.20 664.47,119.13 664.98,120.50 664.25,121.45 662.79,121.31 661.93,121.67 661.00,122.80 659.81,122.64 659.21,121.31 658.46,120.74 657.02,120.50 656.56,119.39 657.41,118.20 657.53,117.27 657.02,115.90 657.75,114.95 659.21,115.09 660.07,114.73" fill="#f0eee6"/><circle cx="661.0" cy="118.2" r="3.40" fill="#f0eee6"/><circle cx="661.0" cy="118.2" r="1.10" fill="#45475a"/><path d="M331 134.2 Q331 133.2 332 133.2 L335.2 133.2 L336.6 134.79999999999998 L342 134.79999999999998 Q343 134.79999999999998 343 135.79999999999998 L343 142.7 Q343 143.7 342 143.7 L332 143.7 Q331 143.7 331 142.7 Z" fill="#f0eee6"/><path d="M335 139.39999999999998 H339 M337 137.39999999999998 V141.39999999999998" stroke="#9361ab" stroke-width="1.3"/><circle cx="365" cy="135.6" r="3" fill="#f0eee6"/><path d="M360 144.6 Q360 139.4 365 139.4 Q370 139.4 370 144.6 Z" fill="#f0eee6"/><path d="M370.5 137.1 H375 M372.75 134.85 V139.35" stroke="#f0eee6" stroke-width="1.2"/><path d="M358.1 155.3 L365.1 161.3 L363.1 161.3 L363.1 167.60000000000002 L353.1 167.60000000000002 L353.1 161.3 L351.1 161.3 Z" fill="#e6e67a"/><circle cx="358.1" cy="161.5" r="1.6" fill="#45475a"/><path d="M355.5 165.70000000000002 Q355.70000000000005 163.5 358.1 163.5 Q360.5 163.5 360.70000000000005 165.70000000000002 Z" fill="#45475a"/><path d="M353.9 181.3 L354.5 189.9 H360.9 L361.5 181.3" fill="none" stroke="#d8dcf0" stroke-width="1.1"/><path d="M352.7 180.5 H362.7 M355.9 180.3 V178.9 H359.5 V180.3" fill="none" stroke="#d8dcf0" stroke-width="1.1"/><path d="M356.3 182.8 V188.3 M357.7 182.8 V188.3 M359.09999999999997 182.8 V188.3" stroke="#d8dcf0" stroke-width="0.7" opacity="0.8"/><path d="M353.9 204.3 L354.5 212.9 H360.9 L361.5 204.3" fill="none" stroke="#d8dcf0" stroke-width="1.1"/><path d="M352.7 203.5 H362.7 M355.9 203.3 V201.9 H359.5 V203.3" fill="none" stroke="#d8dcf0" stroke-width="1.1"/><path d="M356.3 205.8 V211.3 M357.7 205.8 V211.3 M359.09999999999997 205.8 V211.3" stroke="#d8dcf0" stroke-width="0.7" opacity="0.8"/><circle cx="386" cy="181.5" r="3" fill="#f0eee6"/><path d="M381 190.5 Q381 185.3 386 185.3 Q391 185.3 391 190.5 Z" fill="#f0eee6"/><path d="M391.5 183.0 H396 M393.75 180.75 V185.25" stroke="#f0eee6" stroke-width="1.2"/><path d="M413 190.5 L413.8 187.1 L421.6 179.3 L424.2 181.9 L416.4 189.7 Z" fill="#f0eee6"/><path d="M420.6 180.3 L423.2 182.9" stroke="#f0eee6" stroke-width="0.2"/><path d="M332 158.5L341 158.5L336.5 166.6Z" fill="#e6e67a"/><rect x="338.00" y="286.00" width="4.1" height="4.1" fill="#f6e232"/><rect x="341.75" y="286.00" width="4.1" height="4.1" fill="#d95a68"/><rect x="345.50" y="286.00" width="4.1" height="4.1" fill="#d95a68"/><rect x="349.25" y="286.00" width="4.1" height="4.1" fill="#d95a68"/><rect x="353.00" y="286.00" width="4.1" height="4.1" fill="#d95a68"/><rect x="356.75" y="286.00" width="4.1" height="4.1" fill="#d95a68"/><rect x="360.50" y="286.00" width="4.1" height="4.1" fill="#d95a68"/><rect x="364.25" y="286.00" width="4.1" height="4.1" fill="#d95a68"/><rect x="338.00" y="289.75" width="4.1" height="4.1" fill="#d95a68"/><rect x="341.75" y="289.75" width="4.1" height="4.1" fill="#d95a68"/><rect x="345.50" y="289.75" width="4.1" height="4.1" fill="#454759"/><rect x="349.25" y="289.75" width="4.1" height="4.1" fill="#8fe050"/><rect x="353.00" y="289.75" width="4.1" height="4.1" fill="#8fe050"/><rect x="356.75" y="289.75" width="4.1" height="4.1" fill="#8fe050"/><rect x="360.50" y="289.75" width="4.1" height="4.1" fill="#d95a68"/><rect x="364.25" y="289.75" width="4.1" height="4.1" fill="#d95a68"/><rect x="338.00" y="293.50" width="4.1" height="4.1" fill="#d95a68"/><rect x="341.75" y="293.50" width="4.1" height="4.1" fill="#454759"/><rect x="345.50" y="293.50" width="4.1" height="4.1" fill="#8fe050"/><rect x="349.25" y="293.50" width="4.1" height="4.1" fill="#454759"/><rect x="353.00" y="293.50" width="4.1" height="4.1" fill="#454759"/><rect x="356.75" y="293.50" width="4.1" height="4.1" fill="#454759"/><rect x="360.50" y="293.50" width="4.1" height="4.1" fill="#454759"/><rect x="364.25" y="293.50" width="4.1" height="4.1" fill="#d95a68"/><rect x="338.00" y="297.25" width="4.1" height="4.1" fill="#d95a68"/><rect x="341.75" y="297.25" width="4.1" height="4.1" fill="#454759"/><rect x="345.50" y="297.25" width="4.1" height="4.1" fill="#8fe050"/><rect x="349.25" y="297.25" width="4.1" height="4.1" fill="#8fe050"/><rect x="353.00" y="297.25" width="4.1" height="4.1" fill="#8fe050"/><rect x="356.75" y="297.25" width="4.1" height="4.1" fill="#8fe050"/><rect x="360.50" y="297.25" width="4.1" height="4.1" fill="#454759"/><rect x="364.25" y="297.25" width="4.1" height="4.1" fill="#d95a68"/><rect x="338.00" y="301.00" width="4.1" height="4.1" fill="#d95a68"/><rect x="341.75" y="301.00" width="4.1" height="4.1" fill="#454759"/><rect x="345.50" y="301.00" width="4.1" height="4.1" fill="#8fe050"/><rect x="349.25" y="301.00" width="4.1" height="4.1" fill="#454759"/><rect x="353.00" y="301.00" width="4.1" height="4.1" fill="#454759"/><rect x="356.75" y="301.00" width="4.1" height="4.1" fill="#454759"/><rect x="360.50" y="301.00" width="4.1" height="4.1" fill="#454759"/><rect x="364.25" y="301.00" width="4.1" height="4.1" fill="#d95a68"/><rect x="338.00" y="304.75" width="4.1" height="4.1" fill="#d95a68"/><rect x="341.75" y="304.75" width="4.1" height="4.1" fill="#454759"/><rect x="345.50" y="304.75" width="4.1" height="4.1" fill="#8fe050"/><rect x="349.25" y="304.75" width="4.1" height="4.1" fill="#454759"/><rect x="353.00" y="304.75" width="4.1" height="4.1" fill="#454759"/><rect x="356.75" y="304.75" width="4.1" height="4.1" fill="#8fe050"/><rect x="360.50" y="304.75" width="4.1" height="4.1" fill="#454759"/><rect x="364.25" y="304.75" width="4.1" height="4.1" fill="#f6e232"/><rect x="338.00" y="308.50" width="4.1" height="4.1" fill="#d95a68"/><rect x="341.75" y="308.50" width="4.1" height="4.1" fill="#d95a68"/><rect x="345.50" y="308.50" width="4.1" height="4.1" fill="#454759"/><rect x="349.25" y="308.50" width="4.1" height="4.1" fill="#8fe050"/><rect x="353.00" y="308.50" width="4.1" height="4.1" fill="#8fe050"/><rect x="356.75" y="308.50" width="4.1" height="4.1" fill="#454759"/><rect x="360.50" y="308.50" width="4.1" height="4.1" fill="#f6e232"/><rect x="364.25" y="308.50" width="4.1" height="4.1" fill="#d95a68"/><rect x="338.00" y="312.25" width="4.1" height="4.1" fill="#d95a68"/><rect x="341.75" y="312.25" width="4.1" height="4.1" fill="#d95a68"/><rect x="345.50" y="312.25" width="4.1" height="4.1" fill="#d95a68"/><rect x="349.25" y="312.25" width="4.1" height="4.1" fill="#d95a68"/><rect x="353.00" y="312.25" width="4.1" height="4.1" fill="#d95a68"/><rect x="356.75" y="312.25" width="4.1" height="4.1" fill="#f6e232"/><rect x="360.50" y="312.25" width="4.1" height="4.1" fill="#d95a68"/><rect x="364.25" y="312.25" width="4.1" height="4.1" fill="#d95a68"/><rect x="384.00" y="286.00" width="4.1" height="4.1" fill="#f6e232"/><rect x="387.75" y="286.00" width="4.1" height="4.1" fill="#d95a68"/><rect x="391.50" y="286.00" width="4.1" height="4.1" fill="#d95a68"/><rect x="395.25" y="286.00" width="4.1" height="4.1" fill="#d95a68"/><rect x="399.00" y="286.00" width="4.1" height="4.1" fill="#d95a68"/><rect x="402.75" y="286.00" width="4.1" height="4.1" fill="#d95a68"/><rect x="406.50" y="286.00" width="4.1" height="4.1" fill="#d95a68"/><rect x="410.25" y="286.00" width="4.1" height="4.1" fill="#d95a68"/><rect x="384.00" y="289.75" width="4.1" height="4.1" fill="#d95a68"/><rect x="387.75" y="289.75" width="4.1" height="4.1" fill="#d95a68"/><rect x="391.50" y="289.75" width="4.1" height="4.1" fill="#454759"/><rect x="395.25" y="289.75" width="4.1" height="4.1" fill="#8fe050"/><rect x="399.00" y="289.75" width="4.1" height="4.1" fill="#8fe050"/><rect x="402.75" y="289.75" width="4.1" height="4.1" fill="#8fe050"/><rect x="406.50" y="289.75" width="4.1" height="4.1" fill="#d95a68"/><rect x="410.25" y="289.75" width="4.1" height="4.1" fill="#d95a68"/><rect x="384.00" y="293.50" width="4.1" height="4.1" fill="#d95a68"/><rect x="387.75" y="293.50" width="4.1" height="4.1" fill="#454759"/><rect x="391.50" y="293.50" width="4.1" height="4.1" fill="#8fe050"/><rect x="395.25" y="293.50" width="4.1" height="4.1" fill="#454759"/><rect x="399.00" y="293.50" width="4.1" height="4.1" fill="#454759"/><rect x="402.75" y="293.50" width="4.1" height="4.1" fill="#454759"/><rect x="406.50" y="293.50" width="4.1" height="4.1" fill="#454759"/><rect x="410.25" y="293.50" width="4.1" height="4.1" fill="#d95a68"/><rect x="384.00" y="297.25" width="4.1" height="4.1" fill="#d95a68"/><rect x="387.75" y="297.25" width="4.1" height="4.1" fill="#454759"/><rect x="391.50" y="297.25" width="4.1" height="4.1" fill="#8fe050"/><rect x="395.25" y="297.25" width="4.1" height="4.1" fill="#8fe050"/><rect x="399.00" y="297.25" width="4.1" height="4.1" fill="#8fe050"/><rect x="402.75" y="297.25" width="4.1" height="4.1" fill="#8fe050"/><rect x="406.50" y="297.25" width="4.1" height="4.1" fill="#454759"/><rect x="410.25" y="297.25" width="4.1" height="4.1" fill="#d95a68"/><rect x="384.00" y="301.00" width="4.1" height="4.1" fill="#d95a68"/><rect x="387.75" y="301.00" width="4.1" height="4.1" fill="#454759"/><rect x="391.50" y="301.00" width="4.1" height="4.1" fill="#8fe050"/><rect x="395.25" y="301.00" width="4.1" height="4.1" fill="#454759"/><rect x="399.00" y="301.00" width="4.1" height="4.1" fill="#454759"/><rect x="402.75" y="301.00" width="4.1" height="4.1" fill="#454759"/><rect x="406.50" y="301.00" width="4.1" height="4.1" fill="#454759"/><rect x="410.25" y="301.00" width="4.1" height="4.1" fill="#d95a68"/><rect x="384.00" y="304.75" width="4.1" height="4.1" fill="#d95a68"/><rect x="387.75" y="304.75" width="4.1" height="4.1" fill="#454759"/><rect x="391.50" y="304.75" width="4.1" height="4.1" fill="#8fe050"/><rect x="395.25" y="304.75" width="4.1" height="4.1" fill="#454759"/><rect x="399.00" y="304.75" width="4.1" height="4.1" fill="#454759"/><rect x="402.75" y="304.75" width="4.1" height="4.1" fill="#8fe050"/><rect x="406.50" y="304.75" width="4.1" height="4.1" fill="#454759"/><rect x="410.25" y="304.75" width="4.1" height="4.1" fill="#f6e232"/><rect x="384.00" y="308.50" width="4.1" height="4.1" fill="#d95a68"/><rect x="387.75" y="308.50" width="4.1" height="4.1" fill="#d95a68"/><rect x="391.50" y="308.50" width="4.1" height="4.1" fill="#454759"/><rect x="395.25" y="308.50" width="4.1" height="4.1" fill="#8fe050"/><rect x="399.00" y="308.50" width="4.1" height="4.1" fill="#8fe050"/><rect x="402.75" y="308.50" width="4.1" height="4.1" fill="#454759"/><rect x="406.50" y="308.50" width="4.1" height="4.1" fill="#f6e232"/><rect x="410.25" y="308.50" width="4.1" height="4.1" fill="#d95a68"/><rect x="384.00" y="312.25" width="4.1" height="4.1" fill="#d95a68"/><rect x="387.75" y="312.25" width="4.1" height="4.1" fill="#d95a68"/><rect x="391.50" y="312.25" width="4.1" height="4.1" fill="#d95a68"/><rect x="395.25" y="312.25" width="4.1" height="4.1" fill="#d95a68"/><rect x="399.00" y="312.25" width="4.1" height="4.1" fill="#d95a68"/><rect x="402.75" y="312.25" width="4.1" height="4.1" fill="#f6e232"/><rect x="406.50" y="312.25" width="4.1" height="4.1" fill="#d95a68"/><rect x="410.25" y="312.25" width="4.1" height="4.1" fill="#d95a68"/><ellipse cx="444.6" cy="291.5" rx="10" ry="5.2" fill="#c8d6f4" stroke="#000" stroke-width="1.2"/><rect x="437.5" y="297" width="13.8" height="10.4" fill="#c8d6f4" stroke="#000" stroke-width="1.2"/><ellipse cx="435" cy="305.9" rx="4.8" ry="2.3" fill="#c8d6f4" stroke="#000" stroke-width="1.2"/><ellipse cx="455.4" cy="305.9" rx="4.8" ry="2.3" fill="#c8d6f4" stroke="#000" stroke-width="1.2"/><ellipse cx="440.9" cy="313.9" rx="3" ry="1.7" fill="#c8d6f4" stroke="#000" stroke-width="1.1"/><ellipse cx="449.5" cy="313.9" rx="3" ry="1.7" fill="#c8d6f4" stroke="#000" stroke-width="1.1"/></svg>
<div class="r" style="left:0px;top:673px;width:1384px;height:1px;background:#1d1e25;"></div>
</body></html>
